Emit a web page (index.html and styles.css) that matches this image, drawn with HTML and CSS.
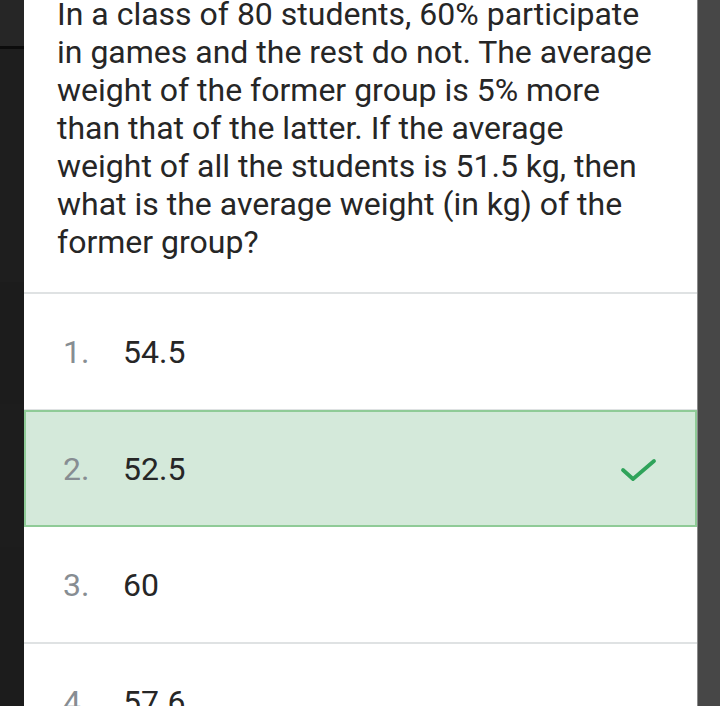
FILE: index.html
```html
<!DOCTYPE html>
<html>
<head>
<meta charset="utf-8">
<link rel="stylesheet" href="styles.css">
</head>
<body>
<div class="screen">
  <div class="side-left">
    <div class="sl-top"></div>
    <div class="sl-line"></div>
    <div class="sl-a"></div>
    <div class="sl-b"></div>
    <div class="sl-c"></div>
    <div class="sl-d"></div>
  </div>
  <div class="card">
    <p class="question">In a class of 80 students, 60% participate in games and the rest do not. The average weight of the former group is 5% more than that of the latter. If the average weight of all the students is 51.5 kg, then what is the average weight (in kg) of the former group?</p>
    <div class="option">
      <span class="num">1.</span><span class="val">54.5</span>
    </div>
    <div class="option correct">
      <span class="num">2.</span><span class="val">52.5</span>
      <svg class="check" width="40" height="32" viewBox="0 0 40 32"><path d="M4 17 L14 26 L35 8" fill="none" stroke="#2fa35a" stroke-width="3.8" stroke-linecap="round" stroke-linejoin="round"/></svg>
    </div>
    <div class="option">
      <span class="num">3.</span><span class="val">60</span>
    </div>
    <div class="option">
      <span class="num">4.</span><span class="val">57.6</span>
    </div>
  </div>
  <div class="side-right"></div>
</div>
</body>
</html>
```
FILE: styles.css
```css
html, body {
  margin: 0;
  padding: 0;
  background: #474747;
}
body {
  width: 720px;
  height: 706px;
  overflow: hidden;
  font-family: Roboto, "Liberation Sans", sans-serif;
}
.screen {
  display: flex;
  height: 706px;
}
.side-left {
  width: 24px;
  flex: none;
  background: #1d1d1d;
  display: flex;
  flex-direction: column;
}
.sl-top { height: 46px; background: #262626; }
.sl-line { height: 3px; background: #0c0c0c; }
.sl-a { height: 233px; background: #1e1e1e; }
.sl-b { height: 122px; background: #1c1c1c; }
.sl-c { height: 143px; background: #1d1d1d; }
.sl-d { flex: 1; background: #1c1c1c; }
.card {
  width: 673px;
  flex: none;
  background: #ffffff;
  border-right: 1px solid #8a8a8a;
  overflow: hidden;
}
.side-right {
  flex: 1;
  background: #474747;
}
.question {
  margin: -5px 0 0 0;
  padding: 0 42px 31px 33px;
  font-size: 32px;
  line-height: 38px;
  color: #262626;
  border-bottom: 2px solid #dfe2e3;
}
.option {
  height: 117px;
  display: flex;
  align-items: center;
  border-bottom: 2px solid #dfe2e3;
  font-size: 32px;
  color: #262626;
  box-sizing: border-box;
  padding-left: 39px;
}
.option .num {
  width: 60px;
  color: #878d92;
}
.option .val {
  flex: 1;
}
.option.correct {
  height: 117px;
  margin-top: -1px;
  background: #d4e9da;
  border: 2px solid #8fcb97;
  padding-left: 37px;
}
.check {
  margin-right: 36px;
}
```
